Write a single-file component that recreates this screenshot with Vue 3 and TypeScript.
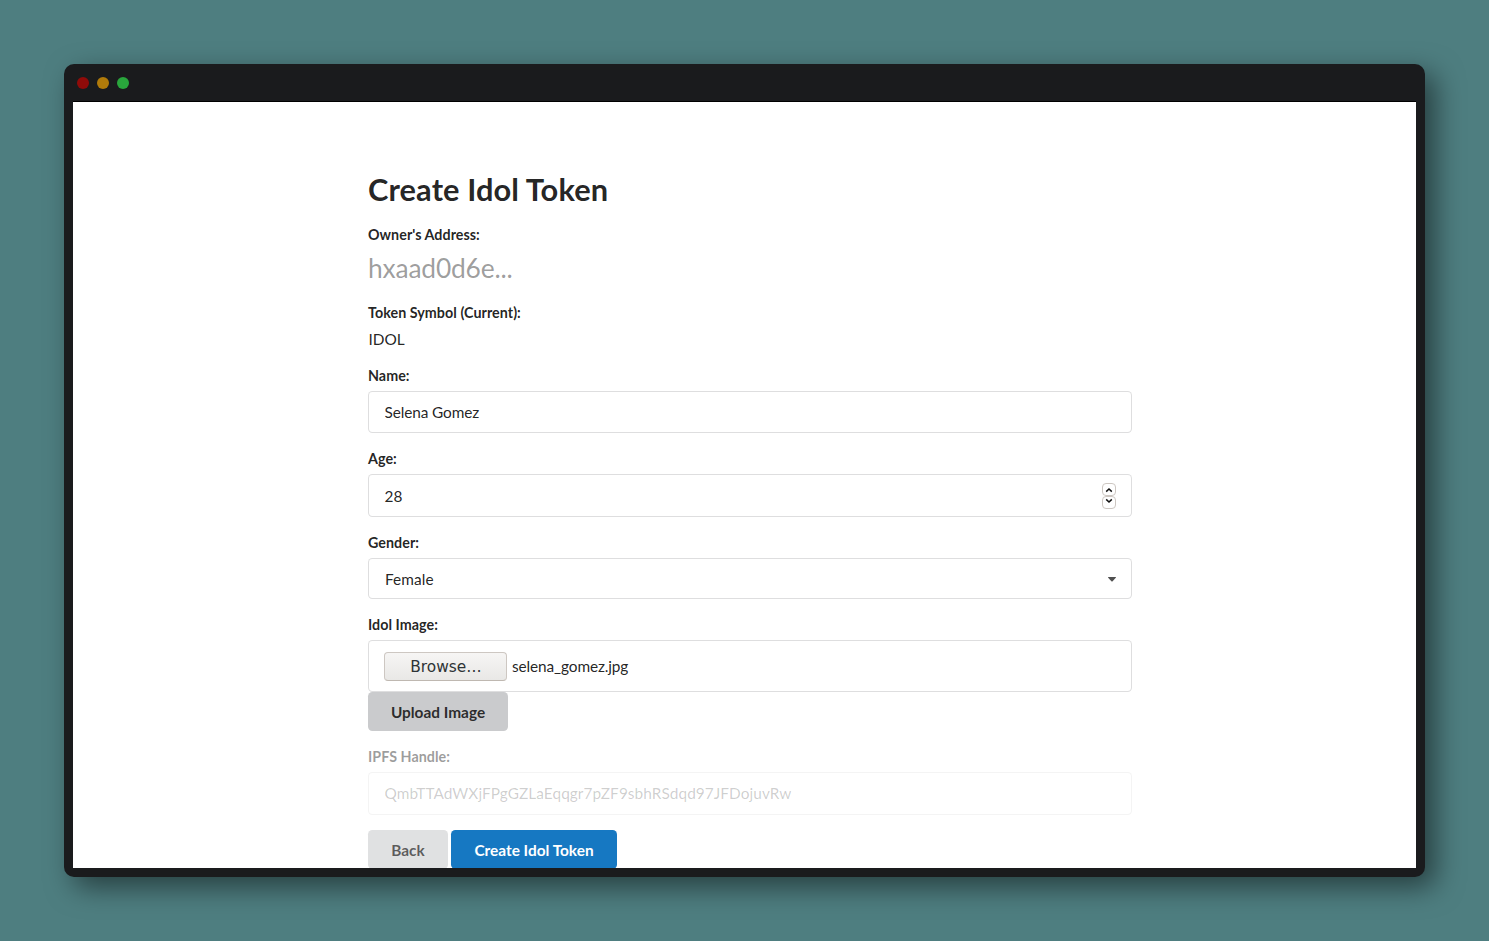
<script setup lang="ts">
import { ref } from 'vue'

const lights: string[] = ['red', 'amber', 'green']
const idolName = ref('Selena Gomez')
const age = ref('28')
const handle = ref('QmbTTAdWXjFPgGZLaEqqgr7pZF9sbhRSdqd97JFDojuvRw')
</script>

<template>
  <div class="desktop">
    <div class="window">
      <header class="titlebar">
        <span v-for="l in lights" :key="l" class="light" :class="l"></span>
      </header>
      <main class="page">
        <form class="form" @submit.prevent>
          <h1>Create Idol Token</h1>
          <div class="field">
            <label>Owner's Address:</label>
            <div class="address">hxaad0d6e...</div>
          </div>
          <div class="field">
            <label>Token Symbol (Current):</label>
            <div class="symbol">IDOL</div>
          </div>
          <div class="field">
            <label>Name:</label>
            <input v-model="idolName" class="control name" type="text" />
          </div>
          <div class="field">
            <label>Age:</label>
            <div class="control age">
              <span>{{ age }}</span>
              <span class="spinner">
                <button type="button" class="step" aria-label="Increase">
                  <svg width="8" height="6" viewBox="0 0 8 6"><path d="M1.2 4.6 4 2l2.8 2.6" /></svg>
                </button>
                <button type="button" class="step down" aria-label="Decrease">
                  <svg width="8" height="6" viewBox="0 0 8 6"><path d="M1.2 1.4 4 4l2.8-2.6" /></svg>
                </button>
              </span>
            </div>
          </div>
          <div class="field">
            <label>Gender:</label>
            <div class="control select">
              <span>Female</span>
              <svg class="caret" width="8" height="5" viewBox="0 0 8 5"><path d="M.5 0h7q.8 0 .3.7L4.6 4.2q-.6.6-1.2 0L.2.7Q-.3 0 .5 0z" /></svg>
            </div>
          </div>
          <div class="field">
            <label>Idol Image:</label>
            <div class="control file">
              <button type="button" class="browse">Browse…</button>
              <span class="filename">selena_gomez.jpg</span>
            </div>
            <button type="button" class="btn upload">Upload Image</button>
          </div>
          <div class="field disabled">
            <label>IPFS Handle:</label>
            <input v-model="handle" class="control handle" type="text" disabled />
          </div>
          <div class="actions">
            <button type="button" class="btn back">Back</button>
            <button type="button" class="btn primary">Create Idol Token</button>
          </div>
        </form>
      </main>
    </div>
  </div>
</template>

<style>
body {
  margin: 0;
  overflow: hidden;
}
</style>

<style scoped>
* {
  box-sizing: border-box;
}
.desktop {
  height: 941px;
  padding: 64px;
  background: #4e7e80;
  font: 15.4px/22px Lato, "Liberation Sans", sans-serif;
  color: rgba(0, 0, 0, 0.87);
}
.window {
  width: 1361px;
  height: 813px;
  padding: 0 9px 9px;
  display: flex;
  flex-direction: column;
  border-radius: 10px;
  background: #1a1b1d;
  box-shadow: 10px 10px 28px rgba(0, 0, 0, 0.5);
}
.titlebar {
  flex: none;
  height: 38px;
  padding: 0 4px;
  display: flex;
  align-items: center;
  gap: 8px;
  border-bottom: 1px solid #000;
}
.light {
  width: 12px;
  height: 12px;
  border-radius: 50%;
}
.red { background: #900b09; }
.amber { background: #b17b0a; }
.green { background: #29a63c; }
.page {
  flex: 1;
  min-height: 0;
  overflow: hidden;
  background: #fff;
}
.form {
  width: 764px;
  margin-left: 295px;
  padding-top: 68px;
}
h1 {
  margin: 0 0 15px;
  font-size: 30.8px;
  line-height: 40px;
  font-weight: 700;
  letter-spacing: 0.1px;
}
.field {
  margin-bottom: 16px;
}
label {
  display: block;
  height: 20px;
  margin-bottom: 5px;
  font-size: 14.3px;
  line-height: 20px;
  font-weight: 700;
  letter-spacing: 0.04px;
}
.address {
  height: 37px;
  font-size: 26.4px;
  line-height: 37px;
  letter-spacing: -0.2px;
  color: rgba(0, 0, 0, 0.4);
}
.symbol {
  height: 22px;
  padding-left: 0.4px;
}
.control {
  display: flex;
  align-items: center;
  width: 100%;
  padding: 0 15px;
  border: 1px solid rgba(34, 36, 38, 0.15);
  border-radius: 4.4px;
  background: #fff;
  font: inherit;
  color: inherit;
}
.name { height: 42px; padding-left: 15.5px; letter-spacing: -0.12px; }
.age { height: 43px; padding-left: 15.5px; justify-content: space-between; }
.select { height: 41px; padding-left: 16px; justify-content: space-between; }
.select span { letter-spacing: 0.06px; }
.file { height: 52px; }
.filename { letter-spacing: -0.12px; }
.handle { height: 43px; padding: 0 15.5px 2px; letter-spacing: 0.055px; }
.spinner {
  display: flex;
  flex-direction: column;
}
.step {
  display: flex;
  align-items: center;
  justify-content: center;
  width: 14px;
  height: 13px;
  padding: 1px 0 0;
  border: 1px solid #cdc7c2;
  border-radius: 4px;
  background: #fff;
}
.step.down {
  padding: 0 0 2px;
}
.step svg {
  flex: none;
  fill: none;
  stroke: #111;
  stroke-width: 1.5;
}
.caret {
  margin-top: 2px;
  fill: #505050;
}
.browse {
  width: 123px;
  height: 29px;
  margin-right: 5px;
  padding: 1px 0 0 1px;
  border: 1px solid #cdc7c2;
  border-bottom-color: #bfb8b1;
  border-radius: 4px;
  background: linear-gradient(#f6f5f4, #e9e8e6);
  font: 15.4px "DejaVu Sans", sans-serif;
  color: #2e3436;
}
.btn {
  display: block;
  height: 39px;
  padding: 1px 0 0;
  border: 0;
  border-radius: 4.4px;
  font: 700 15.4px/38px Lato, sans-serif;
  text-align: center;
}
.upload {
  width: 140px;
  background: #cacbcd;
  color: rgba(0, 0, 0, 0.8);
}
.disabled {
  margin-bottom: 15px;
}
.disabled label {
  opacity: 0.45;
}
.handle {
  border-color: rgba(34, 36, 38, 0.05);
  color: rgba(0, 0, 0, 0.2);
}
.actions {
  display: flex;
  gap: 3px;
}
.back {
  width: 80px;
  background: #e0e1e2;
  color: rgba(0, 0, 0, 0.6);
}
.primary {
  width: 166px;
  background: #1678c2;
  color: #fff;
}
</style>
